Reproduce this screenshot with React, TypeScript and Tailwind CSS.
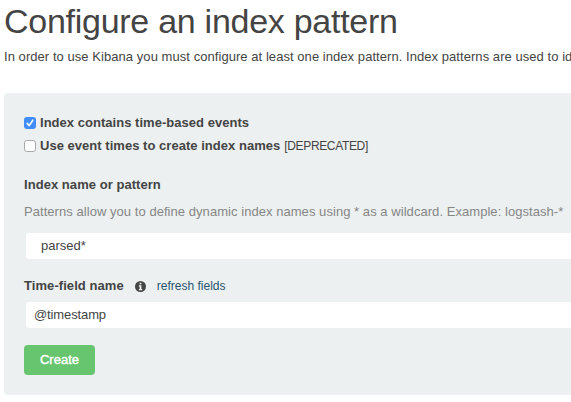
import React from "react";

function Check({ checked = false }: { checked?: boolean }) {
  return (
    <span
      className={
        checked
          ? "flex h-3 w-3 shrink-0 items-center justify-center rounded-[3px] bg-[#3f8cfb]"
          : "flex h-3 w-3 shrink-0 rounded-[3px] border border-[#a9abab] bg-white"
      }
    >
      {checked && (
        <svg viewBox="0 0 12 12" className="h-3 w-3" fill="none" stroke="#fff" strokeWidth="1.6" strokeLinecap="round" strokeLinejoin="round">
          <path d="M3.2 6.4 5.2 8.6 8.8 3.2" />
        </svg>
      )}
    </span>
  );
}

function InfoIcon() {
  return (
    <svg viewBox="0 0 12 12" className="h-[11px] w-[11px]">
      <circle cx="6" cy="6" r="6" fill="#444" />
      <path d="M5 1.8h2v1.7H5zM4.2 4.6H7v4h.9V10H4.2V8.6H5V6h-.8z" fill="#ecf0f0" />
    </svg>
  );
}

export default function App() {
  return (
    <main className="h-[402px] w-[571px] overflow-hidden bg-white pl-1 font-['Liberation_Sans',Arial,sans-serif] text-[13px] leading-5 whitespace-nowrap text-[#444]">
      <h1 className="h-[47px] text-[34px] leading-[43px] tracking-[-0.27px]">Configure an index pattern</h1>
      <p className="h-[46px] tracking-[0.055px]">
        In order to use Kibana you must configure at least one index pattern. Index patterns are used to id
      </p>
      <section className="flex h-[302px] flex-col rounded-l-[4px] bg-[#ecf0f0] pt-5 pl-5">
        <label className="flex h-[23px] items-start gap-1 font-bold tracking-[0.03px]">
          <span className="flex h-5 items-center"><Check checked /></span>
          <span>Index contains time-based events</span>
        </label>
        <label className="flex h-[39px] items-start gap-1">
          <span className="flex h-5 items-center"><Check /></span>
          <span className="font-bold tracking-[0.03px]">Use event times to create index names</span>
          <span className="text-[12px] tracking-[-0.35px]">[DEPRECATED]</span>
        </label>
        <h2 className="h-[27px] font-bold tracking-[0.05px]">Index name or pattern</h2>
        <p className="h-[31px] tracking-[0.05px] text-[#868686]">
          Patterns allow you to define dynamic index names using * as a wildcard. Example: logstash-*
        </p>
        <div className="ml-0.5 flex h-[26px] items-center rounded-l-[3px] bg-white pl-[15px]">parsed*</div>
        <div className="mt-[17px] flex h-[26px] items-start">
          <span className="font-bold tracking-[0.07px]">Time-field name</span>
          <span className="ml-[11px] flex h-5 items-center"><InfoIcon /></span>
          <a className="ml-[11px] text-[12px] text-[#28556f]">refresh fields</a>
        </div>
        <div className="ml-0.5 flex h-[26px] items-center rounded-l-[3px] bg-white pl-2 tracking-[-0.12px]">@timestamp</div>
        <button className="mt-[17px] flex h-[30px] w-[71px] items-center justify-center rounded-[4px] bg-[#66c56e] text-[13px] text-white [-webkit-text-stroke:0.4px_white]">
          Create
        </button>
      </section>
    </main>
  );
}
